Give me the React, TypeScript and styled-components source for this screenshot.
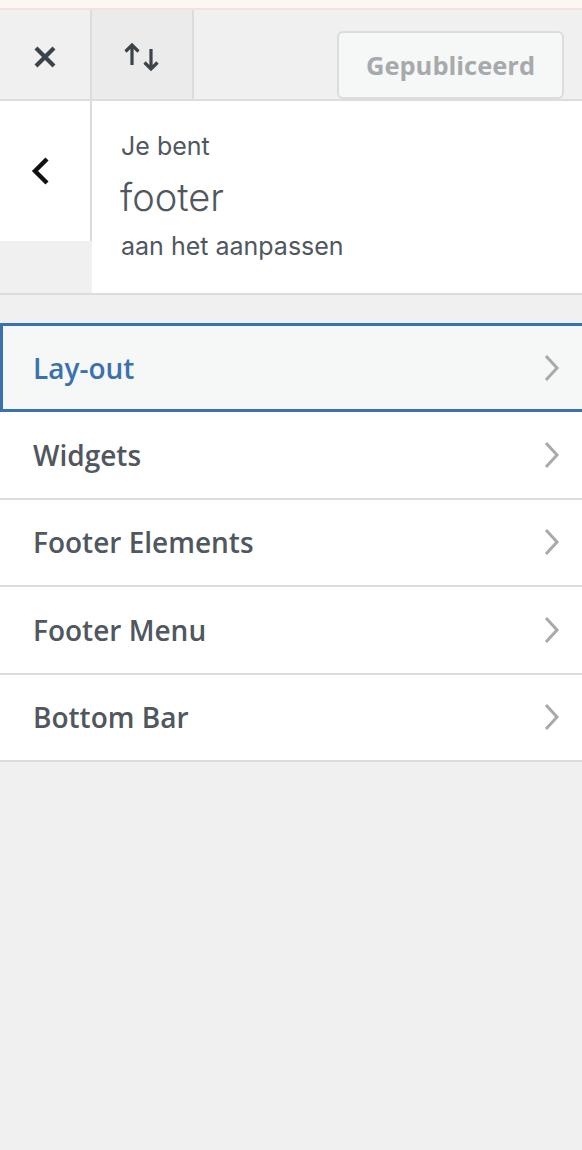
import React from 'react'
import styled, { createGlobalStyle } from 'styled-components'

const GlobalStyle = createGlobalStyle`
  html, body {
    margin: 0;
    padding: 0;
    background: #f0f0f0;
  }
  body {
    font-family: "Open Sans", "Noto Sans", sans-serif;
    -webkit-font-smoothing: antialiased;
  }
`

const Page = styled.div`
  width: 582px;
  min-height: 1150px;
  background: #f0f0f0;
`

const NoticeStrip = styled.div`
  height: 8px;
  background: #fdf7f4;
  border-bottom: 2px solid #f4e0de;
`

const Header = styled.div`
  display: flex;
  align-items: stretch;
  height: 91px;
  background: #f0f0f0;
  border-bottom: 2px solid #dcdcde;
  box-sizing: border-box;
`

const IconButton = styled.button<{ $width: number; $shade?: boolean }>`
  width: ${p => p.$width}px;
  flex: 0 0 auto;
  display: flex;
  align-items: center;
  justify-content: center;
  padding: 4px 0 0;
  border: none;
  border-right: 2px solid #dcdcde;
  background: ${p => (p.$shade ? '#ebebeb' : '#f0f0f0')};
  color: #3c434a;
  cursor: pointer;
`

const Spacer = styled.div`
  flex: 1;
`

const PublishButton = styled.button`
  align-self: flex-start;
  margin: 21px 18px 0 0;
  width: 227px;
  height: 68px;
  box-sizing: border-box;
  border: 2px solid #dcdcde;
  border-radius: 6px;
  background: #f6f7f7;
  color: #a7aaad;
  font-family: "Open Sans", sans-serif;
  font-weight: 700;
  font-size: 25.5px;
  padding: 0;
`

const InfoSection = styled.div`
  display: flex;
  border-bottom: 2px solid #dcdcde;
`

const BackButton = styled.button`
  width: 92px;
  height: 140px;
  flex: 0 0 auto;
  display: flex;
  align-items: center;
  justify-content: center;
  padding: 0 8px 0 0;
  border: none;
  border-right: 2px solid #dcdcde;
  box-sizing: border-box;
  background: #fff;
  cursor: pointer;
`

const InfoText = styled.div`
  flex: 1;
  background: #fff;
  height: 192px;
  box-sizing: border-box;
  padding: 27px 0 0 29px;
  color: #50575e;
  font-family: Inter, "Noto Sans", sans-serif;
`

const InfoSmall = styled.div`
  font-size: 25px;
  line-height: 36px;
`

const InfoTitle = styled.div`
  font-size: 38px;
  font-weight: 300;
  line-height: 52px;
  margin: 7px 0 5px -1px;
`

const Menu = styled.ul`
  list-style: none;
  margin: 28px 0 0;
  padding: 0;
`

const MenuItem = styled.li<{ $active?: boolean }>`
  display: flex;
  align-items: center;
  justify-content: space-between;
  box-sizing: border-box;
  height: 87.5px;
  padding: 0 21px 0 ${p => (p.$active ? '30px' : '33px')};
  background: ${p => (p.$active ? '#f6f7f7' : '#fff')};
  border-bottom: 2px solid #dcdcde;
  border-left: ${p => (p.$active ? '3px solid #3a72ae' : 'none')};
  ${p => p.$active && 'border-top: 3px solid #3a72ae; border-bottom: 3px solid #3a72ae; height: 89px;'}
  color: ${p => (p.$active ? '#3a72ae' : '#50575e')};
  font-size: 28px;
  font-weight: 600;
  cursor: pointer;
`

const CloseIcon = () => (
  <svg width="24" height="24" viewBox="0 0 24 24">
    <path d="M3 3L21 21M21 3L3 21" stroke="#3c434a" strokeWidth="4.2" strokeLinecap="butt" />
  </svg>
)

const SortIcon = () => (
  <svg width="40" height="30" viewBox="0 0 40 30">
    <path d="M10 23V3.5M3.5 9.5L10 3L16.5 9.5" stroke="#3c434a" strokeWidth="3.2" fill="none" />
    <path d="M29 7V26.5M22.5 20.5L29 27L35.5 20.5" stroke="#3c434a" strokeWidth="3.2" fill="none" />
  </svg>
)

const BackIcon = () => (
  <svg width="20" height="30" viewBox="0 0 20 30">
    <path d="M16 3L4 15L16 27" stroke="#111" strokeWidth="4.4" fill="none" />
  </svg>
)

const Chevron = () => (
  <svg width="18" height="30" viewBox="0 0 18 30">
    <path d="M3 3L14 15L3 27" stroke="#a7aaad" strokeWidth="3" fill="none" />
  </svg>
)

const items = ['Lay-out', 'Widgets', 'Footer Elements', 'Footer Menu', 'Bottom Bar']

export default function App() {
  return (
    <Page>
      <GlobalStyle />
      <NoticeStrip />
      <Header>
        <IconButton $width={92}>
          <CloseIcon />
        </IconButton>
        <IconButton $width={102} $shade>
          <SortIcon />
        </IconButton>
        <Spacer />
        <PublishButton disabled>Gepubliceerd</PublishButton>
      </Header>
      <InfoSection>
        <BackButton>
          <BackIcon />
        </BackButton>
        <InfoText>
          <InfoSmall>Je bent</InfoSmall>
          <InfoTitle>footer</InfoTitle>
          <InfoSmall>aan het aanpassen</InfoSmall>
        </InfoText>
      </InfoSection>
      <Menu>
        {items.map((item, i) => (
          <MenuItem key={item} $active={i === 0}>
            <span>{item}</span>
            <Chevron />
          </MenuItem>
        ))}
      </Menu>
    </Page>
  )
}
